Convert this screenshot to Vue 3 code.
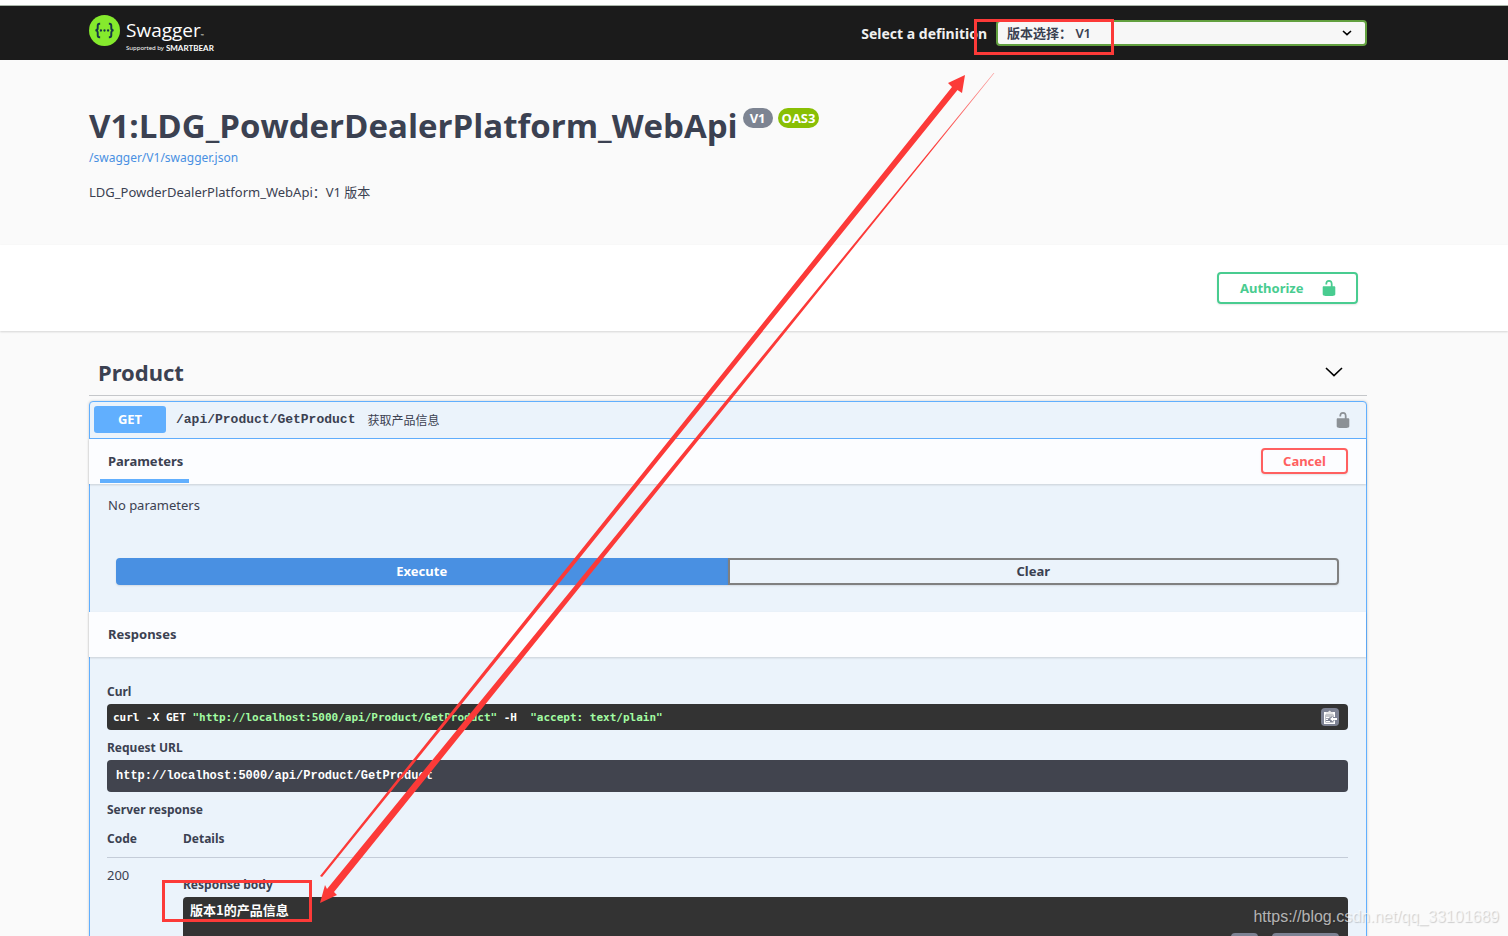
<script setup>
import { ref } from 'vue'

const definition = ref('V1')
const path = '/api/Product/GetProduct'
const url = 'http://localhost:5000' + path
</script>

<template>
  <div class="page">
    <header class="topbar">
      <div class="wrap topbar-row">
        <a class="logo" href="#" aria-label="Swagger, supported by SMARTBEAR">
          <svg class="logo-mark" viewBox="0 0 32 32" aria-hidden="true">
            <circle cx="16" cy="16" r="16" fill="#85ea2d" />
            <g fill="none" stroke="#173647" stroke-width="2">
              <path d="M11.5 9H10.8Q9 9 9 11V13.5Q9 15.8 6.6 15.9Q9 16 9 18.3V21Q9 23 10.8 23H11.5" />
              <path d="M20.5 9H21.2Q23 9 23 11V13.5Q23 15.8 25.4 15.9Q23 16 23 18.3V21Q23 23 21.2 23H20.5" />
            </g>
            <g fill="#173647">
              <circle cx="12.3" cy="16" r="1.2" />
              <circle cx="16" cy="16" r="1.2" />
              <circle cx="19.7" cy="16" r="1.2" />
            </g>
          </svg>
          <span class="logo-text">
            <span class="logo-name">Swagger<span class="tm">™</span></span>
            <span class="logo-sub">Supported by <b>SMARTBEAR</b></span>
          </span>
        </a>
        <div class="definition">
          <label for="definition">Select a definition</label>
          <span class="select-box">
            <select id="definition" v-model="definition">
              <option value="V1">版本选择： V1</option>
            </select>
            <svg class="select-arrow" viewBox="0 0 10 6" aria-hidden="true"><path d="M1 1L5 4.6L9 1" fill="none" stroke="#000" stroke-width="1.6" /></svg>
          </span>
        </div>
      </div>
    </header>

    <section class="info wrap">
      <h1>V1:LDG_PowderDealerPlatform_WebApi<span class="badges"><span class="badge">V1</span><span class="badge oas">OAS3</span></span></h1>
      <a class="json" href="#">/swagger/V1/swagger.json</a>
      <p>LDG_PowderDealerPlatform_WebApi：V1 版本</p>
    </section>

    <section class="schemes">
      <div class="wrap schemes-row">
        <button class="btn authorize" type="button">
          <span>Authorize</span>
          <svg class="lock" viewBox="0 0 20 20" aria-hidden="true"><path fill="currentColor" d="M15.8 8H14V5.6C14 2.703 12.665 1 10 1 7.334 1 6 2.703 6 5.6V6h2v-.801C8 3.754 8.797 3 10 3c1.203 0 2 .754 2 2.199V8H4c-.553 0-1 .646-1 1.199V17c0 .549.428 1.139.951 1.307l1.197.387C5.672 18.861 6.55 19 7.1 19h5.8c.549 0 1.428-.139 1.951-.307l1.196-.387c.524-.167.953-.757.953-1.306V9.199C17 8.646 16.352 8 15.8 8z" /></svg>
        </button>
      </div>
    </section>

    <main class="wrap">
      <h2 class="tag">
        <span>Product</span>
        <button class="icon-btn" type="button" aria-label="Collapse operation">
          <svg class="chevron" viewBox="0 0 18 10" aria-hidden="true"><path d="M1 1L9 8.6L17 1" fill="none" stroke="#000" stroke-width="1.6" /></svg>
        </button>
      </h2>

      <article class="opblock">
        <div class="summary">
          <span class="method">GET</span>
          <code class="path">{{ path }}</code>
          <span class="desc">获取产品信息</span>
          <button class="icon-btn gray" type="button" aria-label="Authorization">
            <svg class="lock" viewBox="0 0 20 20" aria-hidden="true"><path fill="currentColor" d="M15.8 8H14V5.6C14 2.703 12.665 1 10 1 7.334 1 6 2.703 6 5.6V6h2v-.801C8 3.754 8.797 3 10 3c1.203 0 2 .754 2 2.199V8H4c-.553 0-1 .646-1 1.199V17c0 .549.428 1.139.951 1.307l1.197.387C5.672 18.861 6.55 19 7.1 19h5.8c.549 0 1.428-.139 1.951-.307l1.196-.387c.524-.167.953-.757.953-1.306V9.199C17 8.646 16.352 8 15.8 8z" /></svg>
          </button>
        </div>

        <div class="band">
          <h4 class="tab">Parameters</h4>
          <button class="btn cancel" type="button">Cancel</button>
        </div>
        <p class="none">No parameters</p>
        <div class="actions">
          <button class="btn execute" type="button">Execute</button>
          <button class="btn clear" type="button">Clear</button>
        </div>

        <div class="band"><h4>Responses</h4></div>
        <div class="responses">
          <h4>Curl</h4>
          <div class="curl">
            <pre>curl -X GET <span>"{{ url }}"</span> -H  <span>"accept: text/plain"</span></pre>
            <button class="copy" type="button" aria-label="Copy to clipboard">
              <svg viewBox="0 0 16 16" aria-hidden="true">
                <path d="M2 3H13V8H11.5V6H3.5V13.5H11.5V11.5H13V15H2Z" fill="#fff" />
                <path d="M4 5V3.2H6.2C6.4 1.2 8.8 1.2 9 3.2H11V5Z" fill="#e8e8e8" />
                <path d="M3.5 5H11.5V7.5H9.5L7 9.5H3.5Z" fill="#c4c6ca" />
                <path d="M4 8.5H7M4 10.5H6M4 12.5H8" stroke="#fff" />
                <path d="M15 9V11H11V12.5L8 10L11 7.5V9Z" fill="#fff" />
              </svg>
            </button>
          </div>
          <h4>Request URL</h4>
          <pre class="request">{{ url }}</pre>
          <h4>Server response</h4>
          <table>
            <thead>
              <tr><th class="code-col">Code</th><th>Details</th></tr>
            </thead>
            <tbody>
              <tr>
                <td>200</td>
                <td>
                  <h5>Response body</h5>
                  <div class="body">
                    <pre>版本1的产品信息</pre>
                    <div class="body-actions">
                      <button class="copy" type="button" aria-label="Copy response"></button>
                      <button class="download" type="button" aria-label="Save response"></button>
                    </div>
                  </div>
                </td>
              </tr>
            </tbody>
          </table>
        </div>
      </article>
    </main>

    <svg class="marks" width="1508" height="936" viewBox="0 0 1508 936" aria-hidden="true">
      <defs>
        <linearGradient id="fade" gradientUnits="userSpaceOnUse" x1="994" y1="73" x2="930" y2="152">
          <stop offset="0" stop-color="#fc3a38" stop-opacity="0.5" />
          <stop offset="1" stop-color="#fc3a38" />
        </linearGradient>
      </defs>
      <g fill="#fc3a38">
        <path d="M320 876L952 87L948 83L965 75L962 93L957.5 90L322 877Z" />
        <path fill="url(#fade)" d="M993.6 73L327 889L325 885L320 903L337 895L334 892L994.4 73Z" />
      </g>
      <g fill="none" stroke="#fc3a38" stroke-width="3">
        <rect x="975.5" y="20.5" width="137" height="33" />
        <rect x="163.5" y="881.5" width="147" height="39" />
      </g>
    </svg>
    <span class="watermark">https://blog.csdn.net/qq_33101689</span>
  </div>
</template>

<style>
body {
  margin: 0;
}
</style>

<style scoped>
* {
  box-sizing: border-box;
}
.page {
  position: relative;
  height: 100vh;
  overflow: hidden;
  background: #fafafa;
  color: #3b4151;
  font-family: "Noto Sans", "Noto Sans CJK SC", sans-serif;
  font-size: 13px;
}
h1, h2, h4, h5, p, pre {
  margin: 0;
}
button {
  font-family: inherit;
  cursor: pointer;
}
.wrap {
  margin-left: 89px;
  margin-right: 141px;
}
.topbar {
  height: 60px;
  border-top: 5px solid #fff;
  background: #1b1b1b;
  box-shadow: inset 0 1px #a9b5a9;
}
.topbar-row {
  display: flex;
  justify-content: space-between;
}
.logo {
  display: flex;
  gap: 6px;
  padding-top: 10px;
  color: #fff;
  text-decoration: none;
}
.logo-mark {
  width: 31px;
  height: 31px;
}
.logo-text {
  display: flex;
  flex-direction: column;
  padding-top: 7px;
}
.logo-name {
  font-family: "Open Sans", sans-serif;
  font-size: 19px;
  font-weight: 400;
  line-height: 16px;
}
.tm {
  font-size: 4px;
}
.logo-sub {
  display: flex;
  gap: 2px;
  font-size: 6px;
  line-height: 8px;
  white-space: nowrap;
}
.logo-sub b {
  font-family: Lato, sans-serif;
  font-size: 8px;
}
.definition {
  display: flex;
  align-items: center;
  gap: 9px;
  height: 26px;
  margin-top: 15px;
}
.definition label {
  color: #f0f0f0;
  font-size: 14px;
  font-weight: 700;
}
.select-box {
  position: relative;
  width: 371px;
  height: 26px;
}
select {
  appearance: none;
  width: 100%;
  height: 26px;
  padding: 0 9px;
  border: 2px solid #62a03f;
  border-radius: 4px;
  background: #f7f7f7;
  color: #3b4151;
  font-family: "Noto Sans", "Noto Sans CJK SC", sans-serif;
  font-size: 13px;
  font-weight: 600;
}
.select-arrow {
  position: absolute;
  top: 10px;
  right: 15px;
  width: 10px;
  height: 6px;
}
.info {
  height: 185px;
  padding-top: 42px;
}
h1 {
  display: flex;
  font-family: "Open Sans", sans-serif;
  font-size: 33px;
  font-weight: 700;
  line-height: 48px;
  white-space: nowrap;
}
.badges {
  display: flex;
  gap: 5px;
  padding: 6px 0 0 5px;
}
.badge {
  height: 20px;
  padding: 0 7px;
  border-radius: 10px;
  background: #7d8492;
  color: #fff;
  font-size: 13px;
  font-weight: 700;
  line-height: 20px;
}
.badge.oas {
  padding: 0 4px;
  background: #89bf04;
}
.json {
  display: block;
  color: #4990e2;
  font-size: 12px;
  line-height: 16px;
  text-decoration: none;
}
.info p {
  margin-top: 16px;
  line-height: 20px;
}
.schemes {
  background: #fff;
  box-shadow: 0 1px 2px rgba(0, 0, 0, 0.15);
}
.schemes-row {
  display: flex;
  justify-content: flex-end;
  height: 86px;
  padding: 27px 9px 0 0;
}
.btn {
  border: 2px solid gray;
  border-radius: 4px;
  background: transparent;
  box-shadow: 0 1px 2px rgba(0, 0, 0, 0.1);
  color: #3b4151;
  font-size: 13px;
  font-weight: 700;
}
.authorize {
  display: flex;
  align-items: center;
  justify-content: space-between;
  width: 141px;
  height: 32px;
  padding: 0 17px 0 21px;
  border-color: #49cc90;
  color: #49cc90;
}
.lock {
  display: block;
  width: 20px;
  height: 18px;
}
.tag {
  display: flex;
  align-items: center;
  justify-content: space-between;
  height: 50px;
  margin-top: 15px;
  padding: 2px 24px 0 9px;
  border-bottom: 1px solid #c5c7ca;
  font-size: 22px;
}
.icon-btn {
  padding: 0;
  border: 0;
  background: none;
}
.gray {
  margin-left: auto;
  color: #8c9196;
}
.chevron {
  display: block;
  width: 18px;
  height: 10px;
}
.opblock {
  margin-top: 5px;
  border: 1px solid #61affe;
  border-radius: 4px;
  background: #ebf3fb;
  box-shadow: 0 0 3px rgba(0, 0, 0, 0.19);
}
.summary {
  display: flex;
  align-items: center;
  height: 37px;
  padding: 0 13px 1px 4px;
  border-bottom: 1px solid #61affe;
}
.method {
  width: 72px;
  border-radius: 3px;
  background: #61affe;
  color: #fff;
  font-weight: 700;
  line-height: 27px;
  text-align: center;
}
.path {
  margin: 0 12px 0 10px;
  font-family: "Liberation Mono", monospace;
  font-size: 13px;
  font-weight: 700;
}
.desc {
  font-size: 12px;
}
.band {
  display: flex;
  align-items: center;
  justify-content: space-between;
  height: 45px;
  margin-left: -1px;
  padding: 0 18px 1px 11px;
  background: #fcfdff;
  box-shadow: 0 1px 2px rgba(0, 0, 0, 0.15);
}
.band h4 {
  padding: 0 6px 0 8px;
}
h4 {
  font-size: 13px;
  line-height: 20px;
}
.band .tab {
  align-self: stretch;
  border-bottom: 4px solid #61affe;
  line-height: 44px;
}
.cancel {
  width: 87px;
  height: 26px;
  padding: 0;
  border-color: #ff6060;
  color: #ff6060;
}
.none {
  padding: 11px 18px 0;
  line-height: 20px;
}
.actions {
  display: flex;
  padding: 43px 27px 27px 26px;
}
.actions .btn {
  flex: 1;
  height: 27px;
  padding: 0 0 1px;
}
.actions .execute {
  border-color: #4990e2;
  border-radius: 4px 0 0 4px;
  background: #4990e2;
  color: #fff;
}
.actions .clear {
  border-radius: 0 4px 4px 0;
}
.responses {
  padding: 25px 18px 0 17px;
}
.responses h4,
.responses h5,
th {
  font-size: 12px;
}
.curl {
  display: flex;
  align-items: center;
  justify-content: space-between;
  height: 26px;
  margin: 2px 0 8px;
  padding: 0 9px 0 6px;
  border-radius: 4px;
  background: #333;
  color: #fff;
}
.curl pre {
  font: 700 11px "DejaVu Sans Mono", monospace;
}
.curl span {
  color: #a2fca2;
}
.copy,
.download {
  height: 18px;
  padding: 1px;
  border: 0;
  border-radius: 4px;
  background: #7d8293;
}
.copy {
  width: 18px;
}
.copy svg {
  display: block;
  width: 16px;
  height: 16px;
}
.request {
  margin: 2px 0 8px;
  padding: 1px 9px 0;
  border-radius: 4px;
  background: #41444e;
  color: #fff;
  font: 700 12px/31px "Liberation Mono", monospace;
}
table {
  width: 100%;
  border-collapse: collapse;
}
th {
  height: 37px;
  padding: 2px 0 0;
  border-bottom: 1px solid #c4ccd8;
  line-height: 20px;
  text-align: left;
}
.code-col {
  width: 76px;
}
td {
  padding: 7px 0 0;
  line-height: 20px;
  vertical-align: top;
}
td h5 {
  padding-top: 10px;
}
.body {
  display: flex;
  justify-content: space-between;
  align-items: flex-start;
  min-height: 64px;
  margin-top: 2px;
  padding: 3px 9px 0 7px;
  border-radius: 4px;
  background: #333;
  color: #fff;
}
.body pre {
  font: 700 13px/20px "Noto Sans CJK SC", sans-serif;
}
.body-actions {
  display: flex;
  gap: 14px;
  padding-top: 33px;
}
.body-actions .copy {
  width: 27px;
}
.download {
  width: 67px;
}
.marks {
  position: absolute;
  top: 0;
  left: 0;
  pointer-events: none;
}
.watermark {
  position: absolute;
  right: 9px;
  bottom: 9px;
  color: rgba(255, 255, 255, 0.65);
  font: 16px/20px "Liberation Sans", sans-serif;
  text-shadow: 1px 1px 1px rgba(0, 0, 0, 0.18);
}
</style>
